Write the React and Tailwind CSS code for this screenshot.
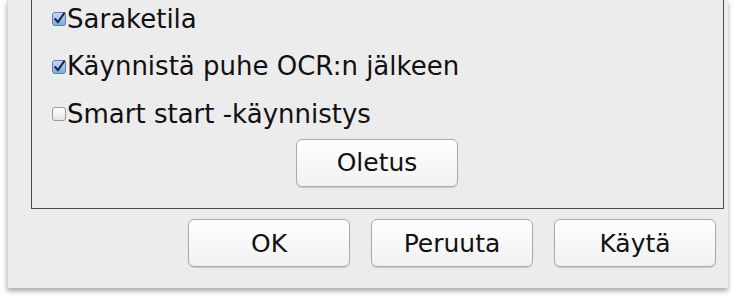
import React from 'react';

const font = { fontFamily: '"DejaVu Sans", "Liberation Sans", sans-serif' };

function CheckBox({ checked }) {
  return (
    <svg width="15" height="15" viewBox="0 0 15 15" className="shrink-0">
      <defs>
        <linearGradient id="cbOn" x1="0" y1="0" x2="0" y2="1">
          <stop offset="0" stopColor="#c9dcf7" />
          <stop offset="1" stopColor="#7fa8e0" />
        </linearGradient>
        <linearGradient id="cbOff" x1="0" y1="0" x2="0" y2="1">
          <stop offset="0" stopColor="#ffffff" />
          <stop offset="1" stopColor="#e4e4e4" />
        </linearGradient>
      </defs>
      <rect x="0.5" y="1.5" width="13" height="13" rx="2.5" fill={checked ? 'url(#cbOn)' : 'url(#cbOff)'} stroke={checked ? '#5a7fb8' : '#9a9a9a'} />
      {checked && (
        <path d="M3.2 8 L6 11.2 L12.2 2.2" fill="none" stroke="#1d2a3d" strokeWidth="2.1" strokeLinecap="round" strokeLinejoin="round" />
      )}
    </svg>
  );
}

function Row({ checked, label }) {
  return (
    <div className="flex items-center h-[47.5px] text-[26px] text-[#111] leading-none">
      <CheckBox checked={checked} />
      <span>{label}</span>
    </div>
  );
}

function Button({ children }) {
  return (
    <button className="w-[162px] h-[48px] rounded-[6px] border border-[#a9a9a9] bg-gradient-to-b from-white to-[#f1f1f1] shadow-[0_1px_1px_rgba(0,0,0,0.15)] text-[25px] text-[#111] leading-none">
      {children}
    </button>
  );
}

export default function App() {
  return (
    <div className="w-[738px] h-[302px] bg-white overflow-hidden" style={font}>
      <div className="ml-[7px] w-[721px] h-[288px] bg-[#ececec] border-l border-[#d8d8d8] shadow-[0_3px_5px_rgba(0,0,0,0.35)] flex flex-col">
        <div className="ml-[23px] w-[693px] h-[209px] border border-t-0 border-[#4a4a4a] flex flex-col pl-[20px]">
          <div className="-mt-[5px]">
            <Row checked label="Saraketila" />
            <Row checked label="Käynnistä puhe OCR:n jälkeen" />
            <Row checked={false} label="Smart start -käynnistys" />
          </div>
          <div className="mt-[1px] ml-[244px]">
            <Button>Oletus</Button>
          </div>
        </div>
        <div className="flex justify-end gap-[21px] mt-[10px] pr-[12px]">
          <Button>OK</Button>
          <Button>Peruuta</Button>
          <Button>Käytä</Button>
        </div>
      </div>
    </div>
  );
}
